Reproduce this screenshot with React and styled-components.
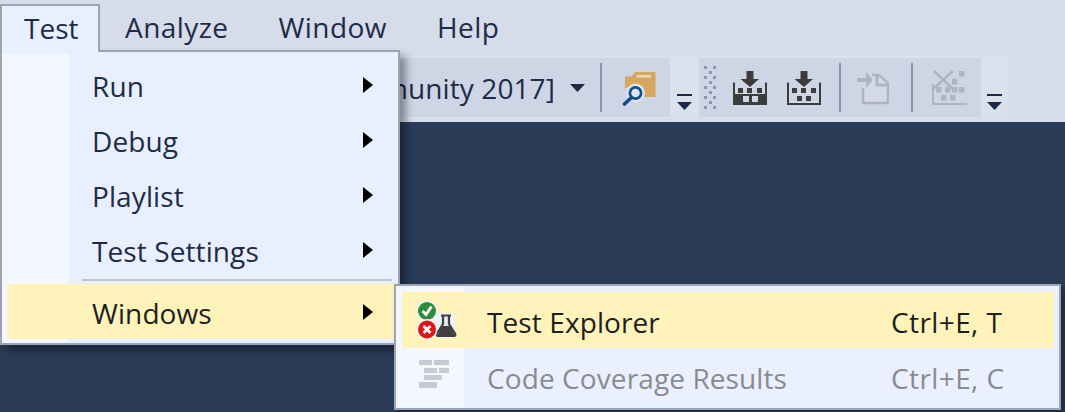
import React from "react";
import styled, { createGlobalStyle } from "styled-components";

const Global = createGlobalStyle`
  html, body { margin: 0; padding: 0; background: #2b3c59; }
  body { width: 1065px; height: 412px; overflow: hidden; font-family: "Open Sans", "Noto Sans", sans-serif; }
`;
const Page = styled.div`
  position: relative; width: 1065px; height: 412px; overflow: hidden; background: #2b3c59;
  font-size: 28px; letter-spacing: 0.1px; color: #1e2c47;
`;
const MenuBar = styled.div`
  height: 50px; background: #d6dcea; display: flex; align-items: flex-start; padding-top: 4px; box-sizing: border-box;
`;
const BarItem = styled.div`
  height: 46px; padding: 0 25px; line-height: 46px; box-sizing: border-box; letter-spacing: 0.45px;
  ${p => p.$open && `
    position: relative; z-index: 3; width: 100px; padding: 0 22px; height: 48px; letter-spacing: 0;
    background: #e8effe; border: 2px solid #9aa6b6; border-bottom: 0; line-height: 44px;
  `}
`;
const Toolbar = styled.div`
  height: 72px; background: #d6dcea; display: flex; padding-top: 6px; box-sizing: border-box;
`;
const Strip = styled.div`
  height: 63px; width: 1008px; display: flex; background: #dbe0ed;
`;
const Group = styled.div`
  height: 59px; margin-top: 2px; width: ${p => p.$w}px; background: #ced6e6;
  display: flex; align-items: center; justify-content: ${p => p.$end ? "flex-end" : "flex-start"};
`;
const Combo = styled.span`
  white-space: nowrap; margin-right: 15px;
`;
const Sep = styled.div`
  width: 2px; height: 49px; background: #8795a9; margin: 0 ${p => p.$r ?? 0}px 0 ${p => p.$l ?? 0}px;
`;
const Slot = styled.div`
  display: flex; margin-left: ${p => p.$l ?? 0}px; margin-right: ${p => p.$r ?? 0}px;
`;
const Overflow = styled.div`
  width: ${p => p.$w}px; display: flex; justify-content: center; padding-top: 38px; box-sizing: border-box;
`;
const Menu = styled.div`
  position: absolute; left: 0; top: 50px; width: 400px; height: 295px; box-sizing: border-box; z-index: 2;
  border: 2px solid #9aa6b6; padding: 5px 4px 4px 5px;
  background: #e8effe linear-gradient(#f4f7ff, #f4f7ff) no-repeat 0 2px / 67px 100%;
  box-shadow: 6px 6px 8px rgba(0,0,0,.38);
`;
const Row = styled.div`
  height: ${p => p.$h || 55}px; display: flex; align-items: center; padding-left: 85px; position: relative;
  background: ${p => p.$hl ? "#fff3bc" : "transparent"};
  color: ${p => p.$hl ? "#1e1e1e" : p.$off ? "#888b90" : "inherit"};
`;
const Label = styled.span`
  flex: 1; white-space: nowrap; padding-top: 2px;
`;
const Arrow = styled.i`
  width: 0; height: 0; margin-right: 21px; border-style: solid; border-width: 8px 0 8px 10px;
  border-color: transparent transparent transparent #000;
`;
const Divider = styled.div`
  height: 2px; margin: 2px 2px 3px 75px; background: #bcc3d4;
`;
const Sub = styled.div`
  position: absolute; left: 394px; top: 284px; width: 667px; height: 126px; box-sizing: border-box; z-index: 4;
  border: 2px solid #9aa6b6; padding: 6px 5px 4px 6px;
  background: #ebf0ff linear-gradient(#f4f7ff, #f4f7ff) no-repeat 0 0 / 68px 100%;
  box-shadow: 4px 4px 6px rgba(0,0,0,.3);
`;
const SubIcon = styled.div`
  position: absolute; left: ${p => p.$l}px; top: ${p => p.$t}px; display: flex;
`;
const Shortcut = styled.span`
  width: 163px; white-space: nowrap; padding-top: 4px; letter-spacing: 0.4px;
`;
const SubLabel = styled(Label)`
  padding-top: 4px;
`;

const Down = () => (
  <svg width="15" height="8" viewBox="0 0 15 8"><path d="M0 0h15L7.500 8z" fill="#1b2a45" /></svg>
);
const Chevron = () => (
  <svg width="15" height="16" viewBox="0 0 15 16"><path d="M0 0h15v2H0z M0 8h15L7.500 16z" fill="#1b2a45" /></svg>
);
const Folder = () => (
  <svg width="36" height="36" viewBox="0 0 36 36">
    <path d="M3 6.500h6.500L13 2h20.500v25H16a10 10 0 0 0-13-9z" fill="#d6a75e" />
    <path d="M15 5h14v2.500H14z" fill="#ecd9b4" />
    <circle cx="13.500" cy="23" r="9.500" fill="#dde3ee" />
    <circle cx="13.500" cy="23" r="5.600" fill="#dfe6f0" stroke="#0f4f8f" strokeWidth="2.600" />
    <path d="M9.500 27.500L2.500 34" stroke="#0f4f8f" strokeWidth="3.600" strokeLinecap="round" />
  </svg>
);
const Grip = () => (
  <svg width="12" height="44" viewBox="0 0 12 44" fill="#8b97aa">
    {[0, 10, 20, 30, 40].map(y => (
      <React.Fragment key={y}>
        <rect x="0" y={y} width="3" height="3" />
        <rect x="9" y={y} width="3" height="3" />
        <rect x="5" y={y + 5} width="3" height="3" />
      </React.Fragment>
    ))}
  </svg>
);
const c = "#3c3c3c";
const Tray = ({ solid }) => (
  <svg width="36" height="36" viewBox="0 0 36 36">
    <path d="M14.500 1h7v8h5.500L18 17 8.500 9H14.500z" fill={c} />
    <path d="M1 12.500h2V33h30V12.500h2V35H1z" fill={c} />
    {solid && <path d="M1 24h34v11H1z" fill={c} />}
    {[6, 15, 25].map(x => <rect key={x} x={x} y="18" width="5" height="5" fill={c} />)}
    {solid
      ? [11, 20].map(x => <rect key={x} x={x} y="26" width="6" height="6" fill="#ced6e6" />)
      : [11, 20].map(x => <rect key={x} x={x} y="26" width="5" height="5" fill={c} />)}
  </svg>
);
const g = "#afb5c0";
const Doc = () => (
  <svg width="32" height="34" viewBox="0 0 32 34" fill="none">
    <path d="M6 17V30a2 2 0 0 0 2 2h21a2 2 0 0 0 2-2V12L22 4H15" stroke={g} strokeWidth="2.600" fill="#d3d9e5" />
    <path d="M20 4v10h11" stroke={g} strokeWidth="3" />
    <path d="M0 7h9V1l7 8-7 8v-6H0z" fill={g} />
  </svg>
);
const Scatter = () => (
  <svg width="36" height="36" viewBox="0 0 36 36" fill={g}>
    <path d="M1 14v21h35v-2H3V14z" />
    <path d="M3 1l19 18M22 1L1 20" stroke={g} strokeWidth="2.600" />
    {[[28, 1], [21, 9], [28, 17], [5, 17], [14, 17], [21, 17], [10, 25], [19, 25]].map(([x, y]) => (
      <rect key={x + "-" + y} x={x} y={y} width="5.500" height="5.500" />
    ))}
  </svg>
);
const TestIcon = () => (
  <svg width="44" height="42" viewBox="0 0 44 42">
    <rect x="22" y="14" width="20" height="25" rx="5" fill="#eef2fb" />
    <path d="M28 16.500h10M30 17v8l-6 9.500a1.500 1.500 0 0 0 1 2.500h16a1.500 1.500 0 0 0 1-2.500L36 25v-8" fill="#e3e6ee" stroke="#3f3f3f" strokeWidth="2.200" />
    <path d="M29.500 27h7l5 9h-17z" fill="#3f3f3f" />
    <circle cx="14" cy="12" r="10.500" fill="#eef2fb" />
    <circle cx="14" cy="12" r="9" fill="#2e8b3a" />
    <path d="M9.500 12l3.500 3.500 5.500-8" stroke="#fff" strokeWidth="2.800" fill="none" />
    <circle cx="14" cy="30.500" r="10.500" fill="#eef2fb" />
    <circle cx="14" cy="30.500" r="9" fill="#e01414" />
    <path d="M10.500 27l7 7M17.500 27l-7 7" stroke="#fff" strokeWidth="2.800" />
  </svg>
);
const CoverageIcon = () => (
  <svg width="30" height="28" viewBox="0 0 30 28" fill="#c6cad2">
    <rect x="0" y="0" width="13" height="5" />
    <rect x="15" y="0" width="15" height="5" />
    <rect x="5" y="8" width="13" height="5" />
    <rect x="20" y="8" width="10" height="5" />
    <rect x="5" y="15" width="18" height="5" />
    <rect x="0" y="22" width="18" height="6" />
  </svg>
);

export default function App() {
  return (
    <Page>
      <Global />
      <MenuBar>
        <BarItem $open>Test</BarItem>
        <BarItem>Analyze</BarItem>
        <BarItem>Window</BarItem>
        <BarItem>Help</BarItem>
      </MenuBar>
      <Toolbar>
        <Strip>
          <Group $w={670} $end>
            <Combo>[Visual Studio Community 2017]</Combo>
            <Slot $r={15}><Down /></Slot>
            <Sep $r={20} />
            <Slot $r={12}><Folder /></Slot>
          </Group>
          <Overflow $w={29}><Chevron /></Overflow>
          <Group $w={282}>
            <Slot $l={5}><Grip /></Slot>
            <Slot $l={16}><Tray solid /></Slot>
            <Slot $l={18}><Tray /></Slot>
            <Sep $l={17} />
            <Slot $l={16}><Doc /></Slot>
            <Sep $l={22} />
            <Slot $l={18}><Scatter /></Slot>
          </Group>
          <Overflow $w={27}><Chevron /></Overflow>
        </Strip>
      </Toolbar>
      <Menu>
        <Row><Label>Run</Label><Arrow /></Row>
        <Row><Label>Debug</Label><Arrow /></Row>
        <Row><Label>Playlist</Label><Arrow /></Row>
        <Row><Label>Test Settings</Label><Arrow /></Row>
        <Divider />
        <Row $hl><Label>Windows</Label><Arrow /></Row>
      </Menu>
      <Sub>
        <Row $hl $h={56}>
          <SubIcon $l={11} $t={7}><TestIcon /></SubIcon>
          <SubLabel>Test Explorer</SubLabel><Shortcut>Ctrl+E, T</Shortcut>
        </Row>
        <Row $off $h={56}>
          <SubIcon $l={17} $t={12}><CoverageIcon /></SubIcon>
          <SubLabel>Code Coverage Results</SubLabel><Shortcut>Ctrl+E, C</Shortcut>
        </Row>
      </Sub>
    </Page>
  );
}
